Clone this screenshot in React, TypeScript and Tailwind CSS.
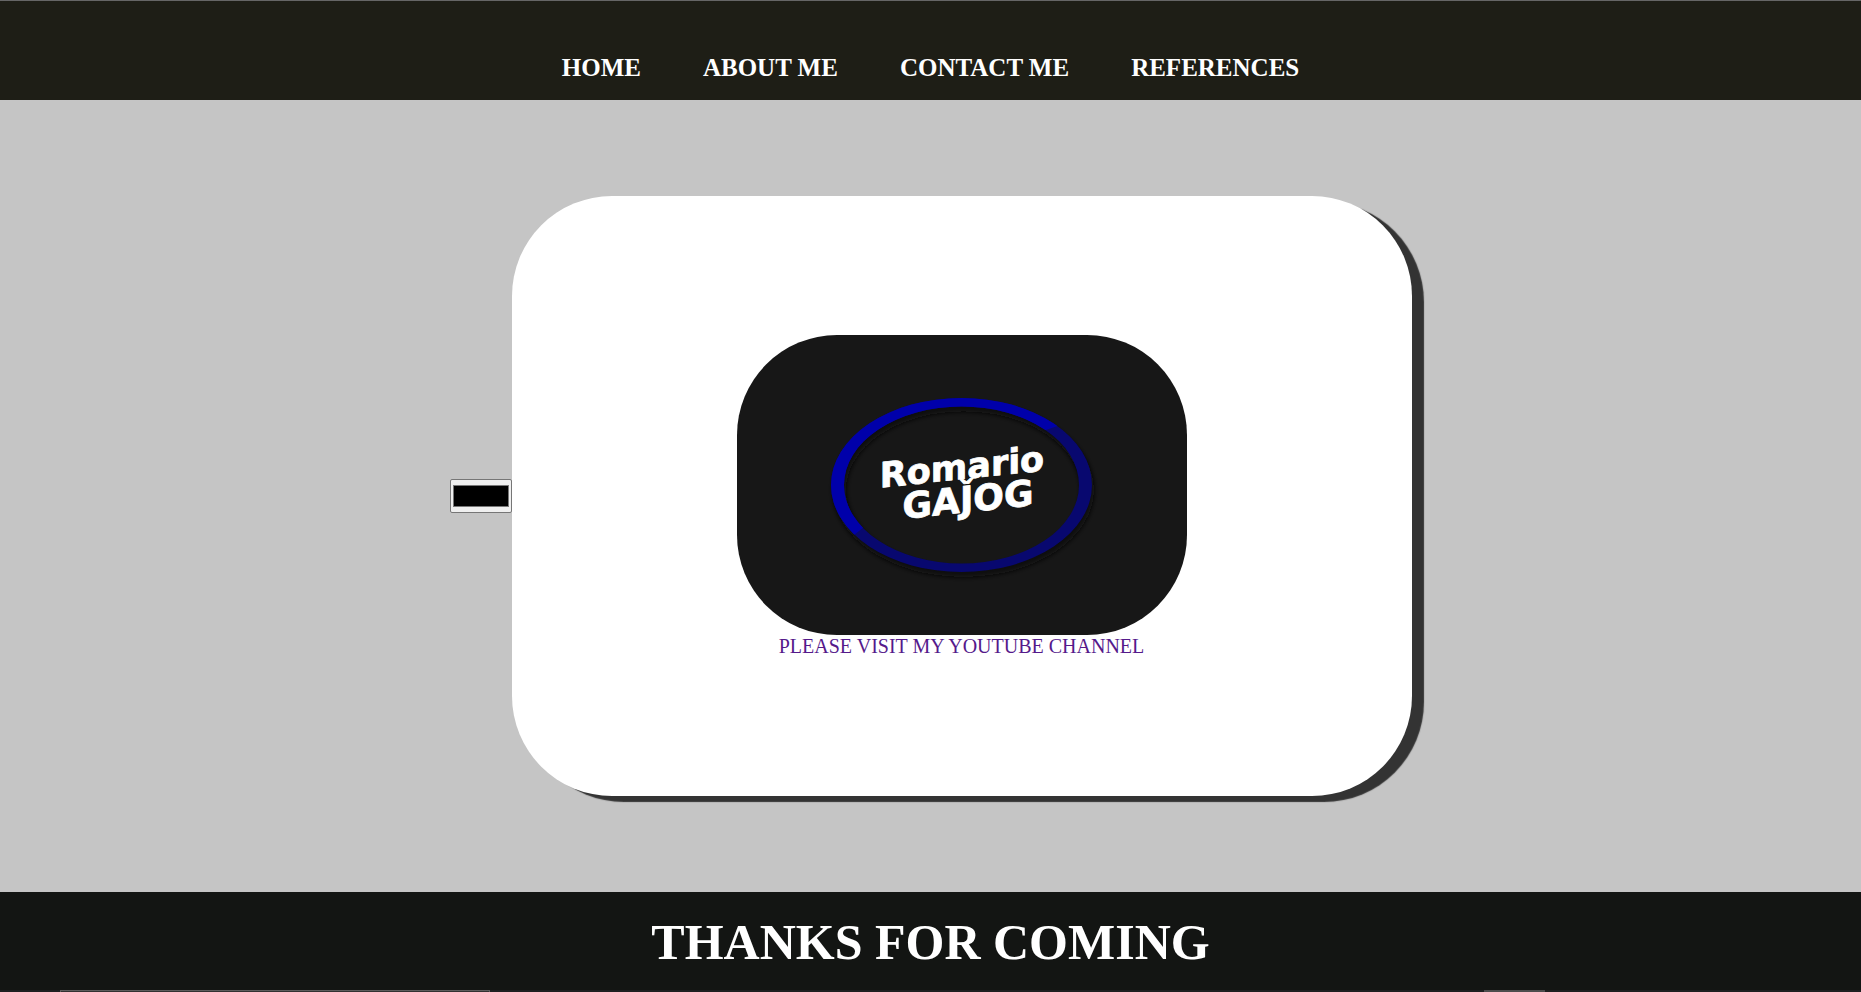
const links = ["HOME", "ABOUT ME", "CONTACT ME", "REFERENCES"];

function Logo() {
  const ring =
    "M94 150a130.5 87 0 1 0 261 0a130.5 87 0 1 0 -261 0ZM107 150a117.5 78.5 0 1 0 235 0a117.5 78.5 0 1 0 -235 0Z";
  return (
    <svg viewBox="0 0 450 300" className="block w-[450px] rounded-[100px] bg-[#171717]" role="img" aria-label="Romario Gajog">
      <defs>
        <clipPath id="lit">
          <path d="M0 0H450V-18L329 88L309 95L127 192L117 200L0 262Z" />
        </clipPath>
        <filter id="soft" x="-10%" y="-10%" width="120%" height="120%">
          <feGaussianBlur stdDeviation="2.5" />
        </filter>
      </defs>
      <path d={ring} fillRule="evenodd" fill="#0b0b0b" filter="url(#soft)" transform="translate(2 5)" />
      <path d={ring} fillRule="evenodd" fill="#08086f" />
      <path d={ring} fillRule="evenodd" fill="#0000aa" clipPath="url(#lit)" />
      <g className="font-['DejaVu_Sans',sans-serif] font-bold" fill="#fff" stroke="#fff" strokeWidth="0.8" strokeLinejoin="round" textAnchor="middle">
        <text fontSize="35" transform="translate(225 144) skewY(-6)">Romario</text>
        <text fontSize="36" transform="translate(231 177) skewY(-6)">GAJ̌OG</text>
      </g>
    </svg>
  );
}

export default function App() {
  return (
    <div className="flex min-h-screen flex-col bg-[#c5c5c5] font-['Liberation_Serif',serif]">
      <header className="border-t border-[#666666] bg-[#1e1e16] pt-[52px] pb-[18px]">
        <nav className="flex justify-center gap-[62px] text-[25px] leading-[29px] font-bold text-white">
          {links.map((label) => (
            <a key={label} href="#">{label}</a>
          ))}
        </nav>
      </header>
      <main className="flex grow items-center justify-center py-24">
        <input
          type="color"
          defaultValue="#000000"
          aria-label="Colour"
          className="h-[34px] w-[62px] rounded-[2px] border border-[#767676] bg-[#efefef] px-0 py-px"
        />
        <section className="flex h-[600px] w-[900px] flex-col items-center justify-center rounded-[100px] bg-white shadow-[12px_6px_1px_#333333]">
          <a href="#" className="flex flex-col items-center text-[20px] leading-[23px] text-[#551a8b]">
            <Logo />
            PLEASE VISIT MY YOUTUBE CHANNEL
          </a>
        </section>
      </main>
      <footer className="bg-[#131513]">
        <h1 className="pt-[21px] pb-[19px] text-center text-[50px] leading-[58px] font-bold text-white">THANKS FOR COMING</h1>
        <div className="flex h-[2px] bg-[#1e1f20]">
          <div className="ml-[60px] w-[430px] border border-b-0 border-[#5c5c5c] bg-[#323232]" />
          <div className="ml-[994px] w-[61px] bg-[#4d4d4d]" />
        </div>
      </footer>
    </div>
  );
}
